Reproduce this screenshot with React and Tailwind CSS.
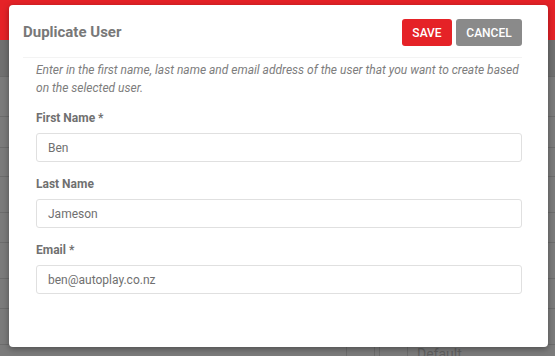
import React from "react";

const rows = [40, 31, 29, 36, 30, 36, 30, 36];

function Field({ label, value, first }) {
  return (
    <div className={first ? "mt-[13px]" : "mt-[14px]"}>
      <div className="h-[17px] leading-[17px] text-[12px] font-bold text-[#707070]">{label}</div>
      <div className="mt-[6px] h-[29px] rounded-[3px] border border-[#e0e0e0] bg-white flex items-center pl-[11px] text-[12px] text-[#707070]">
        {value}
      </div>
    </div>
  );
}

export default function App() {
  return (
    <div
      className="relative w-[555px] h-[356px] overflow-hidden bg-[#7b7b7b]"
      style={{ fontFamily: "Roboto, 'Liberation Sans', sans-serif" }}
    >
      {/* background page */}
      <div className="flex flex-col">
        <div className="h-[40px] bg-[#e52227]" />
        <div className="h-[37px] bg-[#707070] border-b border-[#6a6a6a]" />
        {rows.map((h, i) => (
          <div key={i} className="border-b border-[#6c6c6c]" style={{ height: h }} />
        ))}
        <div className="h-[40px] flex">
          <div className="w-[347px] border-r border-[#6c6c6c]" />
          <div className="w-[28px] border-r border-[#6c6c6c]" />
          <div className="w-[5px] border-r border-[#6c6c6c]" />
          <div className="w-[28px] border-r border-[#6c6c6c]" />
          <div className="pl-[9px] pt-[1px] text-[14px] leading-[16px] text-[#606060]">Default</div>
        </div>
      </div>

      {/* modal */}
      <div className="absolute left-[9px] top-[5px] w-[539px] h-[342px] bg-white rounded-[4px] shadow-[0_2px_6px_rgba(0,0,0,0.35)]">
        <div className="flex items-center justify-between pl-[14px] pr-[26px] pt-[14px]">
          <div className="text-[15px] font-bold text-[#787878] leading-none">Duplicate User</div>
          <div className="flex gap-[4px]">
            <div className="h-[27px] w-[50px] rounded-[3px] bg-[#e52227] text-white text-[12px] font-medium flex items-center justify-center">
              SAVE
            </div>
            <div className="h-[27px] w-[66px] rounded-[3px] bg-[#8a8a8a] text-white text-[12px] font-medium flex items-center justify-center">
              CANCEL
            </div>
          </div>
        </div>
        <div className="ml-[14px] mr-[26px] mt-[11px] h-px bg-[#f3f3f3]" />
        <div className="pl-[27px] pr-[26px] pt-[4px]">
          <p className="text-[12px] italic leading-[17.5px] text-[#7d7d7d]">
            Enter in the first name, last name and email address of the user that you want to create based on the selected user.
          </p>
          <Field label="First Name *" value="Ben" first />
          <Field label="Last Name" value="Jameson" />
          <Field label="Email *" value="ben@autoplay.co.nz" />
        </div>
      </div>
    </div>
  );
}
